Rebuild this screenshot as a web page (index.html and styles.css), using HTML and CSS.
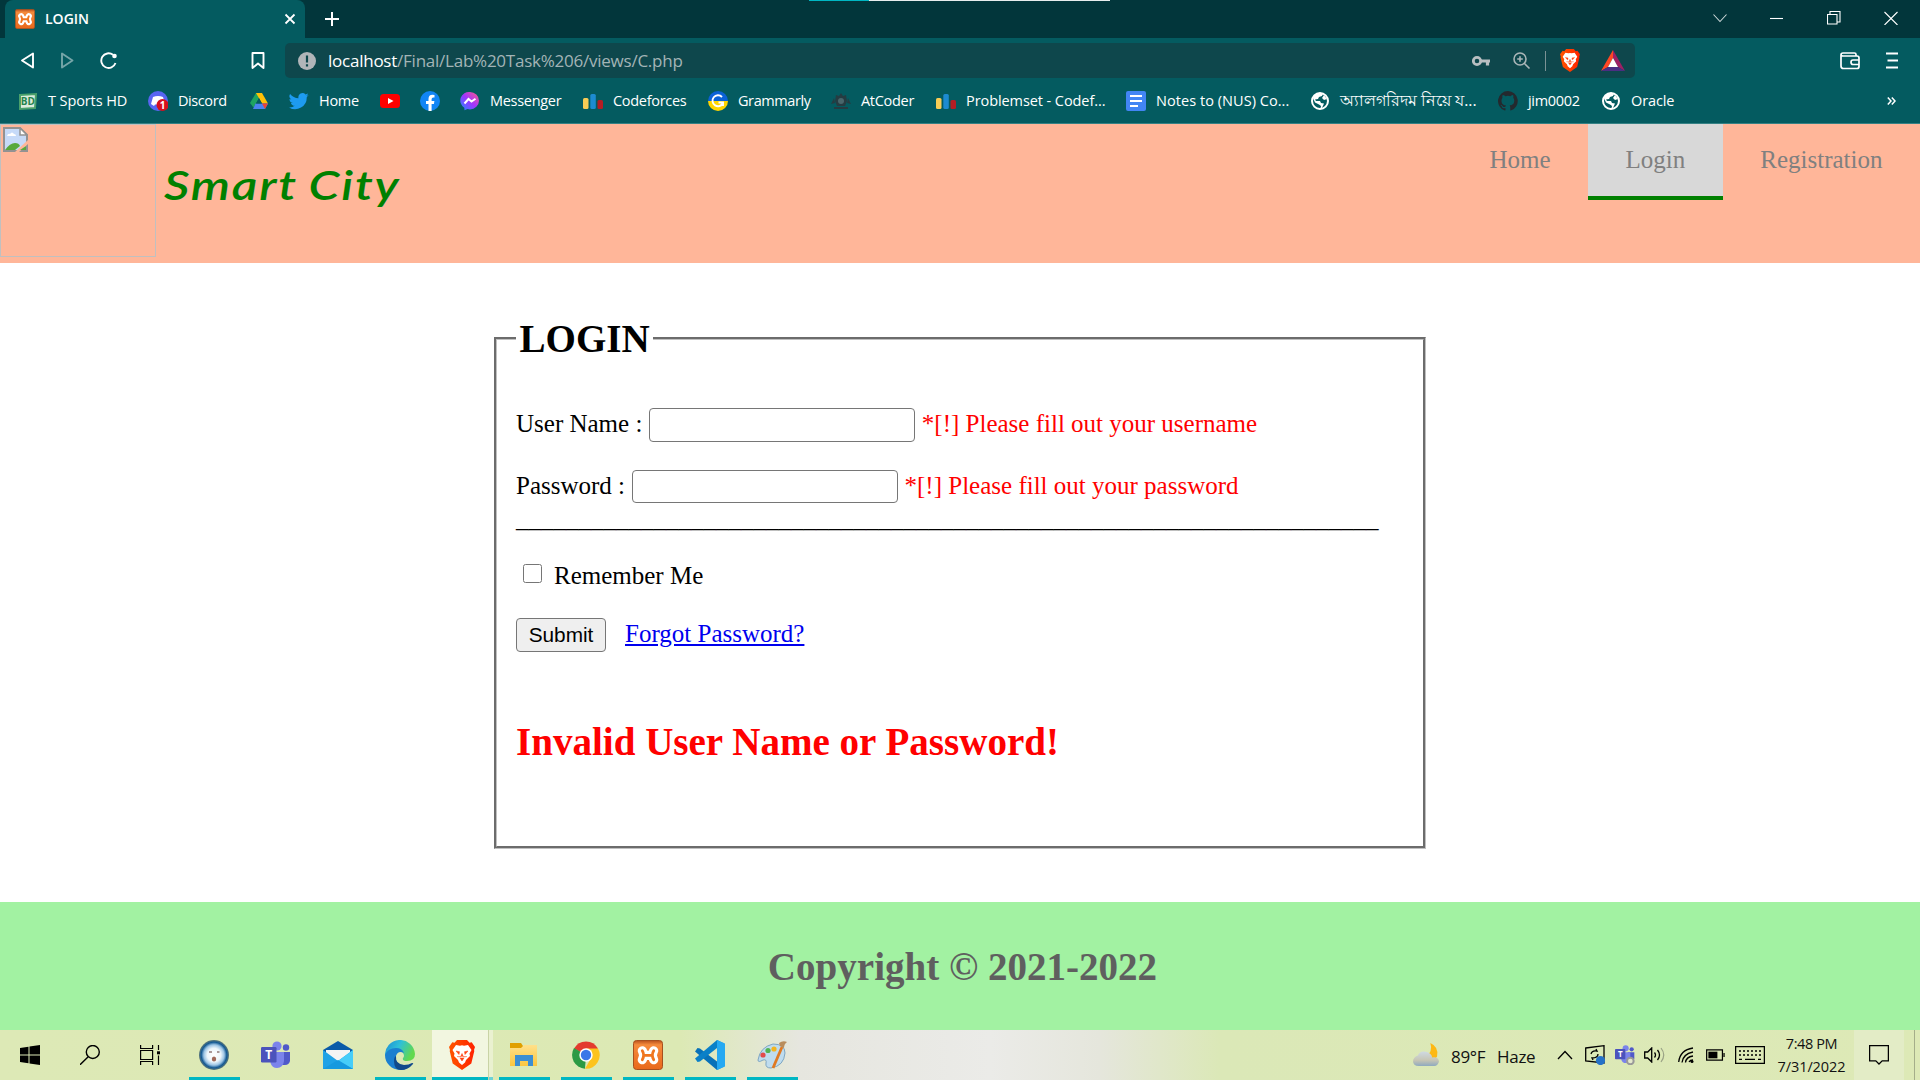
FILE: index.html
```html
<!DOCTYPE html>
<html lang="en">
<head>
<meta charset="utf-8">
<title>LOGIN</title>
<link rel="stylesheet" href="styles.css">
</head>
<body>
<svg class="defs" aria-hidden="true">
  <defs>
    <linearGradient id="msg" x1="0" y1="1" x2="1" y2="0"><stop offset="0" stop-color="#1c8dff"/><stop offset=".5" stop-color="#a033ff"/><stop offset="1" stop-color="#ff5c87"/></linearGradient>
    <linearGradient id="orange" x1="0" y1="0" x2="0" y2="1"><stop offset="0" stop-color="#b9501b"/><stop offset=".15" stop-color="#f58b3c"/><stop offset="1" stop-color="#e9681b"/></linearGradient>
    <linearGradient id="edge" x1="0" y1="0" x2="1" y2=".4"><stop offset="0" stop-color="#1a8ad4"/><stop offset=".5" stop-color="#2fc0d8"/><stop offset="1" stop-color="#62d94e"/></linearGradient>
    <radialGradient id="face"><stop offset="0" stop-color="#fff"/><stop offset=".45" stop-color="#eef6fb"/><stop offset=".68" stop-color="#9cc4e4"/><stop offset=".85" stop-color="#155a94"/><stop offset="1" stop-color="#5c7777"/></radialGradient>
    <linearGradient id="brave" x1="0" y1="0" x2="1" y2="0"><stop offset="0" stop-color="#ff5500"/><stop offset="1" stop-color="#ff2200"/></linearGradient>
    <linearGradient id="folder" x1="0" y1="0" x2="0" y2="1"><stop offset="0" stop-color="#ffe08a"/><stop offset="1" stop-color="#fbc63f"/></linearGradient>
    <linearGradient id="cloud" x1="0" y1="0" x2="0" y2="1"><stop offset="0" stop-color="#cfdae3"/><stop offset=".6" stop-color="#c6c5b4"/><stop offset="1" stop-color="#8ea9bf"/></linearGradient>
    <symbol id="xampp" viewBox="0 0 30 30"><rect x=".5" y=".5" width="29" height="29" rx="3" fill="url(#orange)" stroke="#a6501f"/><g fill="none" stroke-linecap="round"><path d="M9.300 10.800Q12 15 9.300 19.700M20.700 10.800Q18 15 20.700 19.700M11 15.300h8" stroke="#fff" stroke-width="9.200"/><path d="M9.300 10.800Q12 15 9.300 19.700M20.700 10.800Q18 15 20.700 19.700M11 15.300h8" stroke="#f0761f" stroke-width="2.800"/></g></symbol>
    <symbol id="lion" viewBox="0 0 26 30"><path d="M8 0h10l2.500 2.800 2.200-.500L26 7l-1 3 .300 1-3 12.500-9.300 6.500-9.300-6.500L.700 11 1 10 0 7l3.300-4.700 2.200.500z" fill="url(#brave)"/><path d="M7 5l4 .700 2-.500 2 .500L19 5l3.500 5-2 3.500.500 2.500-4 4-1 2.500-3 2.500-3-2.500-1-2.500-4-4 .500-2.500-2-3.500z" fill="#fff"/><path d="M7 11l3.500.700-.500 2.800zM19 11l-3.500.700.500 2.800zM11 18h4l-2 3zM8 16.500l3.500.500 1.500-3.500 1.500 3.500 3.500-.500" fill="#ff4010" stroke="#ff4010" stroke-width=".5"/></symbol>
    <symbol id="globe" viewBox="0 0 20 20"><circle cx="10" cy="10" r="8" fill="none" stroke="#fff" stroke-width="2"/><path d="M3 7Q5 2 10 2l3 1-1 2-3 1-1 2-3 .500 1 1.500h4l1 2 3 .500-2 4.500-3 1.500Q13 15 9 13.500l-4-2zM14 4l3 4-3 1-2-2z" fill="#fff"/></symbol>
    <symbol id="bars" viewBox="0 0 20 20"><rect y="7" width="5.500" height="11" rx="1.500" fill="#f8cc55"/><rect x="7.300" y="3" width="5.500" height="15" rx="1.500" fill="#1d8bd1"/><rect x="14.500" y="9" width="5.500" height="9" rx="1.500" fill="#b51d24"/></symbol>
    <symbol id="teams" viewBox="0 0 30 28"><circle cx="25" cy="6.500" r="3.200" fill="#5059c9"/><path d="M19 11h10v9q-1 4-5 4h-4z" fill="#5059c9"/><circle cx="16" cy="5" r="4.600" fill="#7b83eb"/><path d="M10 11h13v9q-1 7-7 7-5 0-6.500-5z" fill="#7b83eb"/><rect y="6" width="15.500" height="15.500" rx="1.200" fill="#4b53bc"/><text x="7.800" y="18" font-size="12" font-weight="700" text-anchor="middle" fill="#fff">T</text></symbol>
  </defs>
</svg>

<header class="browser">
  <div class="tabs">
    <div class="tab">
      <svg class="fav"><use href="#xampp"/></svg><span class="tab-title">LOGIN</span>
      <svg class="x" viewBox="0 0 12 12"><path d="M1.500 1.500l9 9M10.500 1.500l-9 9" stroke="#fff" stroke-width="1.800"/></svg>
    </div>
    <svg class="plus" viewBox="0 0 16 16"><path d="M8 1v14M1 8h14" stroke="#fff" stroke-width="2"/></svg>
    <div class="winbtns">
      <svg width="14" height="14" viewBox="0 0 14 14"><path d="M.500 3.500l6.500 7 6.500-7" opacity=".8"/></svg>
      <svg width="14" height="14" viewBox="0 0 14 14"><path d="M0 7.500h13"/></svg>
      <svg width="14" height="14" viewBox="0 0 14 14"><path d="M.500 3.500h9.500v9.500h-9.500zM3 3v-2.500h10v10.500h-3"/></svg>
      <svg width="14" height="14" viewBox="0 0 14 14"><path d="M.500 1l13 13M13.500 1l-13 13"/></svg>
    </div>
    <div class="loadbar"></div>
  </div>
  <div class="toolbar">
    <div class="navicons">
      <svg width="16" height="18" viewBox="0 0 16 18"><path d="M13 1.500v14L2 8.500z"/></svg>
      <svg class="dim" width="16" height="18" viewBox="0 0 16 18"><path d="M2 1.500v14l10.500-7z"/></svg>
      <svg width="18" height="18" viewBox="0 0 18 18"><path d="M13 2.800A7.300 7.300 0 1 0 15.500 11"/><circle cx="14.500" cy="4" r="2.300" fill="#fff" stroke="none"/></svg>
      <svg class="mark" width="14" height="18" viewBox="0 0 14 18"><path d="M1.500 1h11v15l-5.500-4.500-5.500 4.500z"/></svg>
    </div>
    <div class="url">
      <svg class="info" viewBox="0 0 18 18"><circle cx="9" cy="9" r="9" fill="#b1b5b9"/><path d="M9 3.500v7M9 12.200v2.200" stroke="#0e474c" stroke-width="2.200"/></svg>
      <span class="address"><b>localhost</b>/Final/Lab%20Task%206/views/C.php</span>
      <svg class="key" viewBox="0 0 18 12"><circle cx="5" cy="6" r="3.700" fill="none" stroke="#b9bfc1" stroke-width="2.800"/><path d="M9 6h9M15.500 6v4.500" stroke="#b9bfc1" stroke-width="3.200"/></svg>
      <svg class="mag" viewBox="0 0 18 18"><path d="M13 7A6 6 0 1 1 1 7a6 6 0 0 1 12 0zM11.500 11.500l5 5M7 4.200v5.600M4.200 7h5.600" fill="none" stroke="#a9b5b7" stroke-width="1.600"/></svg>
      <i class="sep"></i>
      <svg class="shield"><use href="#lion"/></svg>
      <svg class="bat" viewBox="0 0 24 21"><path d="M12 0L0 21l7-4 5-9z" fill="#ff4724"/><path d="M12 0l12 21-7-4-5-9z" fill="#9e1f63"/><path d="M0 21h24l-7-4h-10z" fill="#4b2e83"/><path d="M12 8l5 9h-10z" fill="#fff"/></svg>
    </div>
    <svg class="wallet" viewBox="0 0 20 18"><path d="M16 4V2.500Q16 1 14.500 1H3Q1 1 1 3v11q0 2.500 2.500 2.500H17q2 0 2-2V6q0-2-2-2H3Q1 4 1 2.500M19 8h-6q-2 0-2 2.200T13 12.500h6" fill="none" stroke="#fff" stroke-width="1.700"/></svg>
    <svg class="menu" viewBox="0 0 12 16"><path d="M0 1h12M1.500 8h10.500M0 15h12" stroke="#fff" stroke-width="1.800"/></svg>
  </div>
  <nav class="bookmarks">
    <a><svg viewBox="0 0 20 20"><path d="M2 4l16-1-1 14-15 1z" fill="#dcecdc" stroke="#49a06b" stroke-width="2"/><text x="9.800" y="14" font-size="10" font-weight="700" text-anchor="middle" fill="#26834c">BD</text></svg><span class="t1">T Sports HD</span></a>
    <a><svg viewBox="0 0 20 20"><circle cx="10" cy="10" r="10" fill="#5865f2"/><path d="M5 6q5-2 10 0l2 7-3 2-1-1.500H7L6 15l-3-2z" fill="#fff"/><circle cx="14.500" cy="14" r="6" fill="#d5101e"/><text x="14.500" y="17.800" font-size="10" font-weight="700" text-anchor="middle" fill="#fff">1</text></svg><span class="t2">Discord</span></a>
    <a><svg viewBox="0 0 20 20"><path d="M7 2h6l-8.500 14.500L1 12z" fill="#1ea362"/><path d="M7 2h6l6 10.500h-6z" fill="#ffc107"/><path d="M6.500 12.500H19L16 18H4z" fill="#4a83f0"/><path d="M13 12.500h6L16 18z" fill="#ea4335"/><path d="M10 7l3 5.500H7z" fill="#045b60"/></svg></a>
    <a><svg viewBox="0 0 24 24"><path fill="#1d9bf0" d="M23.600 4.900a10 10 0 0 1-2.800.800 4.900 4.900 0 0 0 2.100-2.700 10 10 0 0 1-3.100 1.200 4.900 4.900 0 0 0-8.400 4.500A14 14 0 0 1 1.300 3.500a4.900 4.900 0 0 0 1.500 6.600 5 5 0 0 1-2.200-.600 4.900 4.900 0 0 0 4 4.800 5 5 0 0 1-2.300.100 4.900 4.900 0 0 0 4.600 3.400A10 10 0 0 1 0 19.800a14 14 0 0 0 21.300-12.500 10 10 0 0 0 2.300-2.400z"/></svg><span class="t3">Home</span></a>
    <a><svg viewBox="0 0 20 20"><rect y="3" width="20" height="14" rx="3.500" fill="#f00"/><path d="M8 7l5.500 3L8 13z" fill="#fff"/></svg></a>
    <a><svg viewBox="0 0 20 20"><circle cx="10" cy="10" r="10" fill="#1185f5"/><path d="M8.500 20v-7H6v-3h2.500V8q0-4.300 4-4.300l2 .200v2.600h-1.300q-1.600 0-1.600 1.700V10h2.800l-.500 3h-2.300v7z" fill="#fff"/></svg></a>
    <a><svg viewBox="0 0 20 20"><path d="M10 1a9 8.700 0 0 1 0 17.400l-2.500-.400-3 1.300-.200-2.500A8.600 8.600 0 0 1 10 1z" fill="url(#msg)"/><path d="M4.500 12.500l4-4.500 3 2.500 4-2.800" fill="none" stroke="#fff" stroke-width="2"/></svg><span class="t4">Messenger</span></a>
    <a><svg><use href="#bars"/></svg><span class="t5">Codeforces</span></a>
    <a><svg viewBox="0 0 20 20"><path d="M0 10a10 10 0 0 1 20 0z" fill="#0b62d6"/><path d="M0 10a10 10 0 0 0 20 0z" fill="#ffd500"/><path d="M14 6A5.500 5.500 0 1 0 15 12M10.500 11.500H15V15" fill="none" stroke="#fff" stroke-width="1.900"/></svg><span class="t6">Grammarly</span></a>
    <a><svg viewBox="0 0 20 20"><path d="M5 4l3 1 2-3 2 3 3-1 1 6-2 5h-8l-2-5zM0 13l3-6 1 5zM20 13l-3-6-1 5zM3 16h14v2H3z" fill="#253c42"/><circle cx="10" cy="10" r="3" fill="#48666b"/></svg><span class="t7">AtCoder</span></a>
    <a><svg><use href="#bars"/></svg><span class="t8">Problemset - Codef...</span></a>
    <a><svg viewBox="0 0 20 20"><rect width="20" height="20" rx="2" fill="#4285f4"/><path d="M4 5h12M4 10h12M4 15h8" stroke="#fff" stroke-width="2.200"/></svg><span class="t9">Notes to (NUS) Co...</span></a>
    <a><svg><use href="#globe"/></svg><span class="t10" lang="bn">অ্যালগরিদম নিয়ে য...</span></a>
    <a><svg viewBox="0 0 16 16"><path fill="#24292e" d="M8 0a8 8 0 0 0-2.500 15.600c.400.100.500-.200.500-.400v-1.500c-2 .400-2.600-.500-2.800-1-.100-.200-.500-.900-.800-1.100-.300-.200-.700-.500 0-.500s1 .600 1.200.800c.700 1.200 1.900.900 2.300.700.100-.500.300-.900.500-1.100-1.800-.200-3.600-.900-3.600-4 0-.900.300-1.600.800-2.100-.100-.200-.400-1 .100-2.100 0 0 .700-.200 2.200.800a7.600 7.600 0 0 1 4 0c1.500-1 2.200-.800 2.200-.800.400 1.100.200 1.900.100 2.100.500.500.800 1.200.800 2.100 0 3.100-1.900 3.800-3.700 4 .300.200.500.700.500 1.500v2.200c0 .200.100.500.500.400A8 8 0 0 0 8 0z"/></svg><span class="t11">jim0002</span></a>
    <a><svg><use href="#globe"/></svg><span class="t12">Oracle</span></a>
    <a class="more"><svg viewBox="0 0 9 8"><path d="M.800.500l3.200 3.500-3.200 3.500M4.800.500l3.200 3.500-3.200 3.500" fill="none" stroke="#fff" stroke-width="1.500"/></svg></a>
  </nav>
</header>

<main class="page">
  <div class="site-header">
    <div class="logo"><svg viewBox="0 0 25 25"><path d="M1 1h16l7 7v16H1z" fill="#c6daf8" stroke="#929292" stroke-width="2"/><path d="M17 1v7h7z" fill="#fff" stroke="#929292" stroke-width="1.500"/><path d="M4 9q1-3 3-2 2-3 4 0 2 0 2 2z" fill="#fff"/><path d="M2 23q5-7 10-7 4 0 5 3l-5 4z" fill="#58a93b"/><path d="M12 25L25 13v4l-9 8z" fill="#ffb699"/><path d="M17 23l6-4v4z" fill="#58a93b"/></svg></div>
    <div class="brand">Smart City</div>
    <nav class="site-nav"><a>Home</a><a class="active">Login</a><a>Registration</a></nav>
  </div>
  <div class="content">
    <fieldset>
      <legend>LOGIN</legend>
      <div class="row user"><label>User Name :</label><input type="text"><span class="err">*[!] Please fill out your username</span></div>
      <div class="row pass"><label>Password :</label><input type="password"><span class="err">*[!] Please fill out your password</span></div>
      <div class="rule">_____________________________________________________________________</div>
      <div class="row remember"><input type="checkbox"><label>Remember Me</label></div>
      <div class="row actions"><button type="button">Submit</button><a href="#">Forgot Password?</a></div>
      <div class="invalid">Invalid User Name or Password!</div>
    </fieldset>
  </div>
  <footer>Copyright © 2021-2022</footer>
</main>

<div class="taskbar">
  <div class="sys"><svg viewBox="0 0 20 20"><path d="M0 3l8.500-1.200v7.700H0zM9.500 1.600L20 0v9.500H9.500zM0 10.500h8.500v7.700L0 17zM9.500 10.500H20V20l-10.500-1.600z"/></svg></div>
  <div class="sys"><svg viewBox="0 0 20 20"><path d="M19.300 7a6.500 6.500 0 1 1-13 0 6.500 6.500 0 0 1 13 0zM8.200 11.700L0 19.800" fill="none" stroke="#000" stroke-width="1.400"/></svg></div>
  <div class="sys"><svg viewBox="0 0 20 20"><path d="M.600 0v3.500h12V0M.600 20v-3.500h12V20M.600 5.500h12v9h-12zM18.500 0v5M18.500 10.500V20" fill="none" stroke="#000" stroke-width="1.200"/><path d="M17 6.300h3v3h-3z"/></svg></div>
  <div class="app on"><svg viewBox="0 0 30 30"><circle cx="15" cy="15" r="15" fill="url(#face)"/><path d="M10 12h3M18 12h2.500" stroke="#917a78" stroke-width="1.600"/><ellipse cx="15" cy="19" rx="2.200" ry="2.600" fill="#a0695a"/></svg></div>
  <div class="app"><svg><use href="#teams"/></svg></div>
  <div class="app"><svg viewBox="0 0 30 30"><path d="M0 10L15 1l15 9v5H0z" fill="#0a5ba8"/><path d="M3 10h24v7l-12 5L3 17z" fill="#f4f4f4"/><path d="M0 10l15 11L30 10v19H0z" fill="#1fa2e6"/><path d="M15 21L30 10v19z" fill="#46cdf9"/><path d="M0 29l15-9 15 9z" fill="#1699df"/></svg></div>
  <div class="app on"><svg viewBox="0 0 30 30"><path d="M0 16A15 15 0 0 1 30 14q0 7-8 7-5 0-4-3 2-2 0-5-3-4-8-3-6 1-10 6z" fill="url(#edge)"/><path d="M0 15Q3 8 11 8q6 0 8 5-6-3-8 3-1 8 7 10 5 1 9-2-5 6-12 6A15 15 0 0 1 0 15z" fill="#1b7fd0"/><path d="M11 16q-1 8 8 9 5 0 8-2 2 0 1 1-5 6-12 6-7 0-7-9 0-4 2-5z" fill="#114a8b"/></svg></div>
  <div class="app current"><svg><use href="#lion"/></svg></div>
  <div class="app on"><svg viewBox="0 0 30 30"><path d="M1 3h11l2 3v4H1z" fill="#e0a000"/><path d="M1 8h11l3-3h13v21H1z" fill="url(#folder)"/><path d="M6 15h18v11h-5v-5h-8v5H6z" fill="#3c8ed2"/></svg></div>
  <div class="app on"><svg viewBox="0 0 30 30"><path d="M15 15L3 8.500A13.700 13.700 0 0 1 27 8.500z" fill="#e33b2e"/><path d="M15 15l-1 13.700A13.700 13.700 0 0 1 3 8z" fill="#2c9a44"/><path d="M15 8.500h12a13.700 13.700 0 0 1-13 20.200l6-10.500z" fill="#fcc31e"/><circle cx="15" cy="15" r="6.700" fill="#fff"/><circle cx="15" cy="15" r="5.200" fill="#3a77e8"/></svg></div>
  <div class="app on"><svg><use href="#xampp"/></svg></div>
  <div class="app on"><svg viewBox="0 0 30 30"><path d="M22 0l7 3.500v23L22 30 0 11.500 2.500 8 5 8.500l17 13z" fill="#0871b8"/><path d="M22 0v8L5 21.500 2.500 22 0 18.500z" fill="#0a80c8"/><path d="M22 0l8 3.500v23L22 30z" fill="#25a9f2"/></svg></div>
  <div class="app on"><svg viewBox="0 0 30 30"><path d="M1 20Q3 7 16 4q12 0 12 9-1 13-14 15-6 0-5-5 1-4-3-3-5 3-5 0z" fill="#bfdcee" stroke="#7ea6c2"/><circle cx="6" cy="15" r="2.600" fill="#e24b4b"/><circle cx="11" cy="10.500" r="2.600" fill="#53b353"/><circle cx="17" cy="9" r="2.600" fill="#f3b520"/><path d="M16 28l9-21" stroke="#e07a22" stroke-width="2.800"/><path d="M22 3q4-3 8-1-3 2-3 6l-4-2z" fill="#b98d5c"/></svg></div>
  <div class="tray">
    <svg class="wx" viewBox="0 0 28 26"><path d="M18 0q9 4 7 14l-4 5-8-4q8-6 5-15z" fill="#fdb813"/><path d="M5 13q2-5 8-4 6 1 7 6 6-1 7 4-1 5-5 5H6q-6 0-6-5 0-4 5-6z" fill="url(#cloud)"/></svg>
    <span class="temp">89°F</span><span class="haze">Haze</span>
    <svg class="up" viewBox="0 0 16 10"><path d="M1 9l7-7.500L15 9" class="ln"/></svg>
    <svg class="sync" viewBox="0 0 20 20"><path d="M.700 3L19 .700V18L.700 16zM6 9q1-4 6-3l-1-2M13 9q0 4-6 4l1 2" class="ln"/><circle cx="15.500" cy="15.500" r="4.600" fill="#2672c8"/></svg>
    <svg class="tm" viewBox="0 0 30 30"><use href="#teams" width="30" height="28"/><circle cx="23" cy="24" r="5" fill="#e4e9cc" stroke="#999" stroke-width="3"/></svg>
    <svg class="vol" viewBox="0 0 21 16"><path d="M.700 5h3l4-4v14l-4-4h-3zM10.500 5.500q2 2.500 0 5M13.500 3q4 5 0 10" class="ln"/><path d="M17 1q5.500 7 0 14" fill="none" stroke="#9aa285" stroke-width="1.200"/></svg>
    <svg class="wifi" viewBox="0 0 16 16"><path d="M.700 15Q2 3 15 1M4 15.500Q5 7 15 5M7.500 15.500Q8 10 15 9" class="ln"/><path d="M11 15q1-2 4-2" class="ln"/><circle cx="14" cy="14.500" r="1.500"/></svg>
    <svg class="batt" viewBox="0 0 20 12"><path d="M.700.700h16.600v10.600H.700zM19 4v4" class="ln"/><path d="M2.500 2.500h9.500v7H2.500z"/></svg>
    <svg class="kbd" viewBox="0 0 30 18"><path d="M.600.600h28.800v16.800H.600z" class="ln"/><path d="M4 5h22M4 9h22" stroke="#000" stroke-width="1.300" stroke-dasharray="2 2"/><path d="M4 13.300h3M10 13.300h10M23 13.300h3" class="ln"/></svg>
    <div class="clock"><span class="time">7:48 PM</span><span class="date">7/31/2022</span></div>
    <div class="notif"><svg viewBox="0 0 20 20"><path d="M.600.600h18.800v15.300h-6.200L10 19l-3.200-3.100H.600z" class="ln"/></svg></div>
    <i class="peek"></i>
  </div>
</div>
</body>
</html>
```
FILE: styles.css
```css
* { box-sizing: border-box; }
body { margin: 0; width: 1920px; height: 1080px; overflow: hidden; background: #fff; font-family: "Liberation Serif", serif; font-size: 25px; display: flex; flex-direction: column; }
svg { display: block; flex: none; }
.defs { position: absolute; width: 0; height: 0; }
.browser, .taskbar { font-family: "Open Sans", "Noto Sans", sans-serif; }

/* Browser chrome */
.browser { height: 124px; background: #045b60; border-bottom: 1px solid #358184; color: #fff; flex: none; }
.tabs { height: 38px; background: #02363b; display: flex; align-items: center; padding-left: 5px; position: relative; }
.tab { width: 300px; height: 38px; background: #045b60; border-radius: 8px 8px 0 0; display: flex; align-items: center; padding: 0 9px 0 10px; }
.fav { width: 20px; height: 20px; }
.tab-title { font-size: 14px; font-weight: 600; margin-left: 10px; letter-spacing: 0; padding-bottom: 2px; }
.x { width: 12px; height: 12px; margin-left: auto; }
.plus { width: 16px; height: 16px; margin-left: 19px; }
.winbtns { margin-left: auto; display: flex; gap: 43px; padding: 0 22px 2px 0; }
.winbtns path { fill: none; stroke: #fff; stroke-width: 1.1; }
.loadbar { position: absolute; left: 809px; top: 0; width: 301px; height: 1px; background: linear-gradient(90deg, #00b7c3 60px, #e8eeee 60px); }
.toolbar { height: 45px; display: flex; align-items: center; }
.navicons { width: 285px; display: flex; align-items: center; padding-left: 20px; gap: 24px; }
.navicons path { fill: none; stroke: #fff; stroke-width: 1.9; stroke-linejoin: round; }
.navicons .dim { opacity: .45; }
.navicons .mark { margin-left: 109px; }
.url { width: 1350px; height: 35px; border-radius: 5px; background: #0e474c; display: flex; align-items: center; padding-left: 13px; }
.info { width: 18px; height: 18px; }
.address { margin-left: 12px; font-size: 17px; letter-spacing: -.24px; color: #a3b4b6; width: 1144px; white-space: nowrap; }
.address b { font-weight: 400; color: #fff; }
.key { width: 18px; height: 12px; }
.mag { width: 18px; height: 18px; margin-left: 23px; }
.sep { width: 1px; height: 20px; margin-left: 14px; background: #7b9295; }
.shield { width: 20px; height: 23px; margin-left: 14px; }
.bat { width: 24px; height: 21px; margin-left: 21px; }
.wallet { width: 20px; height: 18px; margin-left: 205px; }
.menu { width: 12px; height: 17px; margin-left: 26px; }
.bookmarks { height: 36px; padding-left: 18px; display: grid; grid-template-columns: 130px 101px 40px 91px 40px 40px 123px 125px 123px 105px 190px 184px 188px 103px 286px auto; align-items: center; font-size: 14.5px; }
.bookmarks a { display: flex; align-items: center; gap: 10px; white-space: nowrap; height: 22px; }
.bookmarks svg { width: 20px; height: 20px; }
.bookmarks .more svg { width: 9px; height: 8px; }
.bookmarks span { letter-spacing: -.3px; padding-bottom: 2px; }
.bookmarks .t1 { letter-spacing: -.1px; }
.bookmarks .t2, .bookmarks .t6 { letter-spacing: -.42px; }
.bookmarks .t8 { letter-spacing: -.08px; }
.bookmarks .t9 { letter-spacing: .05px; }
.bookmarks .t10 { font-size: 15.8px; letter-spacing: 0; padding-bottom: 0; }
.bookmarks .t12 { letter-spacing: -.1px; }

/* Site */
.page { flex: 1; display: flex; flex-direction: column; }
.site-header { height: 139px; background: #ffb699; display: flex; }
.logo { width: 156px; height: 133px; border: 1px solid #c0c0c0; padding: 2px; }
.logo svg { width: 25px; height: 25px; }
.brand { margin-left: 8px; padding-top: 37px; font: italic 600 41px/48px Lato, sans-serif; color: green; letter-spacing: 1.5px; word-spacing: -2px; white-space: nowrap; transform: scaleX(1.21); transform-origin: left; }
.site-nav { margin-left: auto; display: flex; color: #808080; }
.site-nav a { height: 76px; padding: 22px 37.5px 0; line-height: 28px; }
.site-nav .active { background: #d8d8d8; border-bottom: 4px solid green; }
.content { flex: 1; }
fieldset { margin: 53px 0 0 494px; width: 932px; height: 533px; padding: 0 19px; min-width: 0; border: 3px groove #c0c0c0; }
legend { font-size: 39.06px; font-weight: 700; line-height: 45px; padding: 0 3px 0 3.5px; }
.row { display: flex; align-items: center; white-space: nowrap; line-height: 28px; }
.row input[type=text], .row input[type=password] { width: 266px; height: 34px; border: 1px solid #767676; border-radius: 4px; margin: 0 7px 0 6.5px; padding: 0; background: #fff; }
.row label, .err { padding-bottom: 3px; }
.err { color: red; }
.user { margin-top: 47px; height: 34px; }
.pass { margin-top: 28px; height: 34px; }
.row.pass input { height: 33px; margin-bottom: 1px; }
.rule { height: 28px; line-height: 30px; white-space: nowrap; }
.remember { margin-top: 29px; height: 28px; }
.remember input { width: 19px; height: 19px; margin: 0 12px 3px 7px; }
.row.remember label { padding: 2px 0 0; }
.actions { margin-top: 29px; height: 34px; }
.actions button { width: 90px; height: 34px; padding: 0; border: 1px solid #767676; border-radius: 4px; background: #efefef; font: 20.8px/30px "Liberation Sans", sans-serif; color: #000; }
.actions a { margin-left: 19px; padding-bottom: 2px; color: #0000ee; }
.invalid { margin-top: 67px; font-size: 39.06px; line-height: 45px; font-weight: 700; color: red; }
footer { height: 128px; background: #a2f2a2; color: #5f5f5f; font-size: 39.06px; font-weight: 700; text-align: center; line-height: 130px; padding-left: 5px; }

/* Taskbar */
.taskbar { height: 50px; flex: none; display: flex; background: linear-gradient(90deg, #dde9b6 0, #dce9b4 680px, #e6e6df 800px, #ebebe8 990px, #e5e6dc 1100px, #dbe8b7 1220px, #dde9b6 100%); color: #111; }
.sys { width: 60px; display: flex; align-items: center; justify-content: center; }
.sys svg { width: 20px; height: 20px; }
.sys:nth-child(3) { margin-right: 3px; }
.app { width: 62px; display: flex; align-items: center; justify-content: center; }
.app svg { width: 30px; height: 30px; }
.on { background: linear-gradient(#00b7c3, #00b7c3) 6px 47px / 51px 3px no-repeat; }
.current { background: linear-gradient(#00b7c3, #00b7c3) 1px 47px / 56px 3px no-repeat, linear-gradient(#6dd2d6, #6dd2d6) 58px 47px / 4px 3px no-repeat, linear-gradient(90deg, transparent 1px, #f2f6e0 1px 57px, #c9d3a5 57px 58px, #eaf1d0 58px); }
.tray { margin-left: auto; display: flex; align-items: center; white-space: nowrap; }
.ln { fill: none; stroke: #000; stroke-width: 1.3; }
.wx { width: 27px; height: 25px; margin-right: 11px; }
.temp, .haze { font-size: 17px; letter-spacing: -.3px; width: 46px; padding-top: 2px; }
.haze { width: 60px; }
.up { width: 16px; height: 10px; margin-right: 12px; }
.sync { width: 20px; height: 20px; margin-right: 10px; }
.tm { width: 20px; height: 20px; margin-right: 9px; }
.vol { width: 21px; height: 16px; margin-right: 13px; }
.wifi { width: 16px; height: 16px; margin-right: 12px; }
.batt { width: 19px; height: 12px; margin-right: 10px; }
.kbd { width: 30px; height: 18px; }
.clock { width: 89px; display: flex; flex-direction: column; align-items: center; font-size: 14.5px; line-height: 23px; padding-left: 4px; }
.time { letter-spacing: -.4px; }
.date { letter-spacing: -.1px; }
.notif { width: 50px; height: 50px; background: #e3ecc6; display: flex; align-items: center; justify-content: center; }
.notif svg { width: 20px; height: 20px; }
.peek { width: 6px; height: 50px; margin-left: 10px; border-left: 1px solid #a5ae8a; }
```
